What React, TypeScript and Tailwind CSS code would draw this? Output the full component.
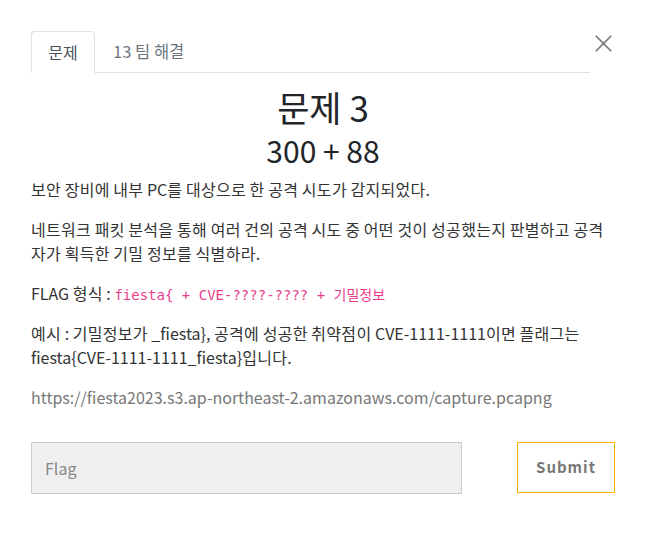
import { Fragment } from 'react';
import { X } from 'lucide-react';

const font = { fontFamily: '"Noto Sans CJK KR", "Noto Sans", sans-serif' };

// Hangul in the source page sets a touch wider than Noto's, so space those runs a bit
function K({ text }: { text: string }) {
  const parts = text.split(/([\uAC00-\uD7A3]+)/);
  return (
    <>
      {parts.map((p, i) =>
        /[\uAC00-\uD7A3]/.test(p) ? (
          <span key={i} className="tracking-[0.3px]">
            {p}
          </span>
        ) : (
          <Fragment key={i}>{p}</Fragment>
        )
      )}
    </>
  );
}

export default function App() {
  return (
    <div className="w-[646px] h-[540px] bg-white text-[#212529] relative" style={font}>
      <button className="absolute left-[589px] top-[29px] text-[#777]">
        <X size={29} strokeWidth={1.45} />
      </button>

      <div className="pt-[31px] px-[31px]">
        {/* tabs */}
        <div className="flex border-b border-[#dee2e6] h-[42px] mr-[25px]">
          <div className="w-[64px] border border-[#dee2e6] border-b-white -mb-px rounded-t-[4px] flex items-center justify-center text-[16px] text-[#495057] bg-white">
            <span>문제</span>
          </div>
          <div className="pl-[18px] flex items-center text-[16.5px] text-[#6c757d]">
            <span>13 팀 해결</span>
          </div>
        </div>

        {/* title */}
        <div className="text-center pt-[14px]">
          <h3 className="text-[35px] leading-[40px] text-[#212529]">문제 3</h3>
          <h4 className="text-[30px] leading-[36px] mt-[5px] text-[#212529]">300 + 88</h4>
        </div>

        {/* description */}
        <div className="text-[16px] leading-[24px] text-[#333] mt-[9px]">
          <p>
            <K text="보안 장비에 내부 PC를 대상으로 한 공격 시도가 감지되었다." />
          </p>
          <p className="mt-[16px]">
            <K text="네트워크 패킷 분석을 통해 여러 건의 공격 시도 중 어떤 것이 성공했는지 판별하고 공격자가 획득한 기밀 정보를 식별하라." />
          </p>
          <p className="mt-[16px]">
            <K text="FLAG 형식 : " />
            <code
              className="text-[14px] leading-[16px] text-[#e83e8c]"
              style={{ fontFamily: '"DejaVu Sans Mono", "Noto Sans CJK KR", monospace' }}
            >
              fiesta{'{'} + CVE-????-???? + 기밀정보
            </code>
          </p>
          <p className="mt-[16px]">
            <K text="예시 : 기밀정보가 _fiesta}, 공격에 성공한 취약점이 CVE-1111-1111이면 플래그는 fiesta{CVE-1111-1111_fiesta}입니다." />
          </p>
          <p className="mt-[16px] text-[#777]">https://fiesta2023.s3.ap-northeast-2.amazonaws.com/capture.pcapng</p>
        </div>

        {/* form */}
        <div className="flex items-start mt-[33px]">
          <input
            placeholder="Flag"
            className="w-[431px] shrink-0 h-[52px] bg-[#efefef] border border-[#ccc] px-[13px] text-[16px] placeholder:text-[#888] outline-none"
            style={font}
          />
          <div className="ml-[55px] shrink-0 w-[98px] h-[51px] border border-[#ffb000] flex items-center justify-center text-[15px] font-bold text-[#777] tracking-[1px]">
            Submit
          </div>
        </div>
      </div>
    </div>
  );
}
